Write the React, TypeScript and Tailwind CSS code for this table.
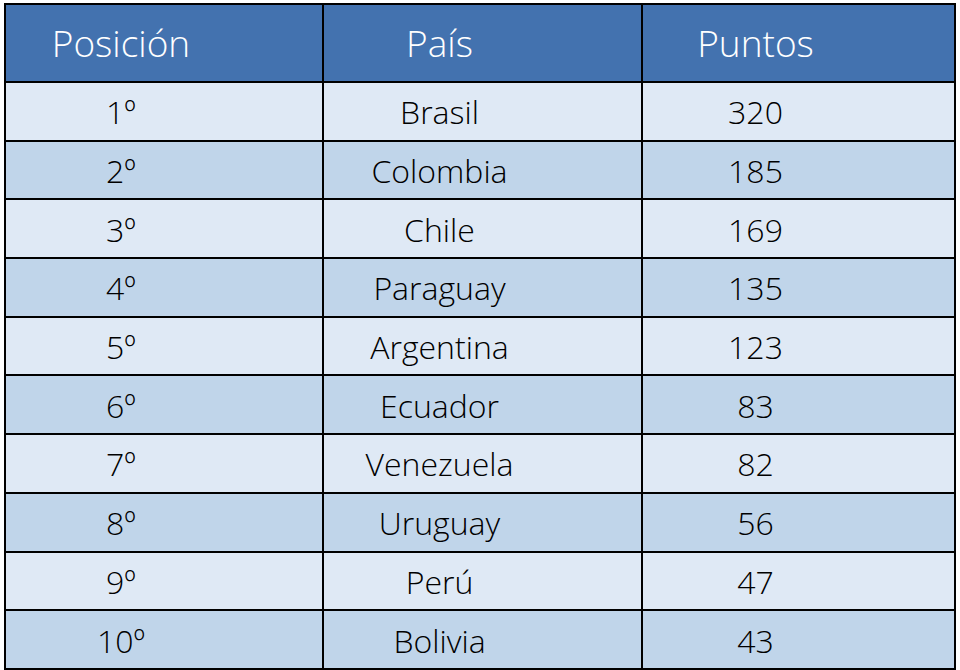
const rows = [
    { pos: "1º", pais: "Brasil", puntos: "320" },
    { pos: "2º", pais: "Colombia", puntos: "185" },
    { pos: "3º", pais: "Chile", puntos: "169" },
    { pos: "4º", pais: "Paraguay", puntos: "135" },
    { pos: "5º", pais: "Argentina", puntos: "123" },
    { pos: "6º", pais: "Ecuador", puntos: "83" },
    { pos: "7º", pais: "Venezuela", puntos: "82" },
    { pos: "8º", pais: "Uruguay", puntos: "56" },
    { pos: "9º", pais: "Perú", puntos: "47" },
    { pos: "10º", pais: "Bolivia", puntos: "43" },
];

const App = () => {
    return (
        <div className="w-[960px] h-[670px] bg-white pl-[4px] pt-[3px] font-['Open_Sans',sans-serif]">
            <table className="w-[952px] border-collapse border-2 border-black text-[32px] font-light">
                <thead>
                    {/* Header row */}
                    <tr className="h-[78px] bg-[#4372AF] text-white text-[37px]">
                        <th className="w-[318px] border-2 border-black font-light text-center pr-[86px]">Posición</th>
                        <th className="w-[319px] border-2 border-black font-light text-center pr-[86px]">País</th>
                        <th className="border-2 border-black font-light text-center pr-[86px]">Puntos</th>
                    </tr>
                </thead>
                <tbody>
                    {rows.map((r, i) => (
                        <tr
                            key={r.pos}
                            className={`h-[58.7px] text-black ${i % 2 === 0 ? "bg-[#DFE9F5]" : "bg-[#C0D5EA]"}`}
                        >
                            <td className="border-2 border-black text-center pr-[86px] pt-[2px]">{r.pos}</td>
                            <td className="border-2 border-black text-center pr-[86px] pt-[2px]">{r.pais}</td>
                            <td className="border-2 border-black text-center pr-[86px] pt-[2px]">{r.puntos}</td>
                        </tr>
                    ))}
                </tbody>
            </table>
        </div>
    );
};

export default App;
